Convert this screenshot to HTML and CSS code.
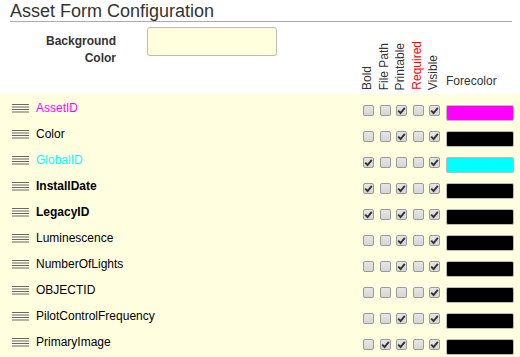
FILE: index.html
```html
<!DOCTYPE html>
<html>
<head>
<meta charset="utf-8">
<link rel="stylesheet" href="styles.css">
</head>
<body>
<h1 class="title">Asset Form Configuration</h1>
<div class="top">
  <div class="bg-field">
    <div class="bg-label">Background<br>Color</div>
    <div class="bg-input"></div>
  </div>
  <div class="heads">
    <span class="vhead">Bold</span>
    <span class="vhead">File Path</span>
    <span class="vhead">Printable</span>
    <span class="vhead req">Required</span>
    <span class="vhead">Visible</span>
  </div>
  <div class="fore-head">Forecolor</div>
</div>
<div class="list" id="list"></div>
<script src="app.js"></script>
</body>
</html>
```
FILE: app.js
```js
const rows = [
  ["AssetID", "magenta", "", [0,0,1,0,1], "#ff00ff"],
  ["Color", "", "", [0,0,1,0,1], "#000000"],
  ["GlobalID", "cyan", "", [1,0,0,0,1], "#00ffff"],
  ["InstallDate", "", "bold", [1,0,1,0,1], "#000000"],
  ["LegacyID", "", "bold", [1,0,1,0,1], "#000000"],
  ["Luminescence", "", "", [0,0,1,0,1], "#000000"],
  ["NumberOfLights", "", "", [0,0,1,0,1], "#000000"],
  ["OBJECTID", "", "", [0,0,0,0,1], "#000000"],
  ["PilotControlFrequency", "", "", [0,0,1,0,1], "#000000"],
  ["PrimaryImage", "", "", [0,1,1,0,1], "#000000"]
];
const tick = '<svg viewBox="0 0 9 9" width="9" height="9"><path d="M1.2 4.6 L3.6 7 L7.8 1.8" fill="none" stroke="#333" stroke-width="1.9"/></svg>';
const handle = '<svg viewBox="0 0 17 9" width="17" height="9"><g stroke="#666" stroke-width="1"><line x1="0" y1="0.5" x2="17" y2="0.5"/><line x1="0" y1="3" x2="17" y2="3"/><line x1="0" y1="5.5" x2="17" y2="5.5"/><line x1="0" y1="8" x2="17" y2="8"/></g></svg>';
const list = document.getElementById("list");
list.innerHTML = rows.map(([name, color, weight, checks, sw]) => `
  <div class="row">
    <span class="handle">${handle}</span>
    <span class="name ${color} ${weight}">${name}</span>
    <span class="checks">${checks.map(c => `<span class="cb">${c ? tick : ""}</span>`).join("")}</span>
    <span class="swatch" style="background:${sw}"></span>
  </div>`).join("");
```
FILE: styles.css
```css
body {
  margin: 0;
  font-family: "Liberation Sans", Arial, sans-serif;
  color: #333;
  background: #fff;
}
.title {
  margin: 0 8px 0 10px;
  padding-top: 1px;
  font-size: 18px;
  line-height: 20px;
  font-weight: normal;
  color: #333;
  border-bottom: 1px solid #aaa;
}
.top {
  display: flex;
  height: 72px;
}
.bg-field {
  display: flex;
  align-items: flex-start;
  margin-left: 10px;
}
.bg-label {
  width: 106px;
  margin-top: 11px;
  text-align: right;
  font-size: 12px;
  line-height: 17px;
  font-weight: bold;
  color: #333;
}
.bg-input {
  box-sizing: border-box;
  width: 130px;
  height: 29px;
  margin: 5px 0 0 31px;
  background: #ffffdd;
  border: 1px solid #bbb;
  border-radius: 3px;
}
.heads {
  display: flex;
  align-items: flex-end;
  gap: 2.5px;
  margin-left: 83px;
  padding-bottom: 4px;
}
.vhead {
  width: 14px;
  writing-mode: vertical-rl;
  transform: rotate(180deg);
  font-size: 12px;
  line-height: 14px;
  color: #333;
  white-space: nowrap;
}
.vhead.req {
  color: #ff0000;
}
.fore-head {
  align-self: flex-end;
  margin: 0 0 6px 6px;
  font-size: 12px;
  line-height: 14px;
  color: #333;
}
.list {
  background: #ffffe0;
  padding-top: 2px;
  min-height: 270px;
}
.row {
  display: flex;
  align-items: flex-start;
  height: 26px;
}
.handle {
  display: block;
  width: 17px;
  height: 9px;
  margin: 8px 7px 0 12px;
}
.handle svg {
  display: block;
}
.name {
  flex: 1;
  margin-top: 4px;
  font-size: 12px;
  line-height: 16px;
  color: #000;
}
.name.magenta { color: #ff00ff; }
.name.cyan { color: #00ffff; }
.name.bold { font-weight: bold; }
.checks {
  display: flex;
  gap: 5.5px;
  margin-top: 9px;
}
.cb {
  box-sizing: border-box;
  width: 11px;
  height: 11px;
  border: 1px solid #9a9a9a;
  border-radius: 2px;
  background: linear-gradient(#e6e6e6, #d6d6d6);
  display: flex;
  align-items: center;
  justify-content: center;
}
.cb svg {
  display: block;
}
.swatch {
  box-sizing: border-box;
  width: 68px;
  height: 16px;
  margin: 9px 6px 0 6px;
  border: 1px solid #bbb;
  border-radius: 2px;
}
```
